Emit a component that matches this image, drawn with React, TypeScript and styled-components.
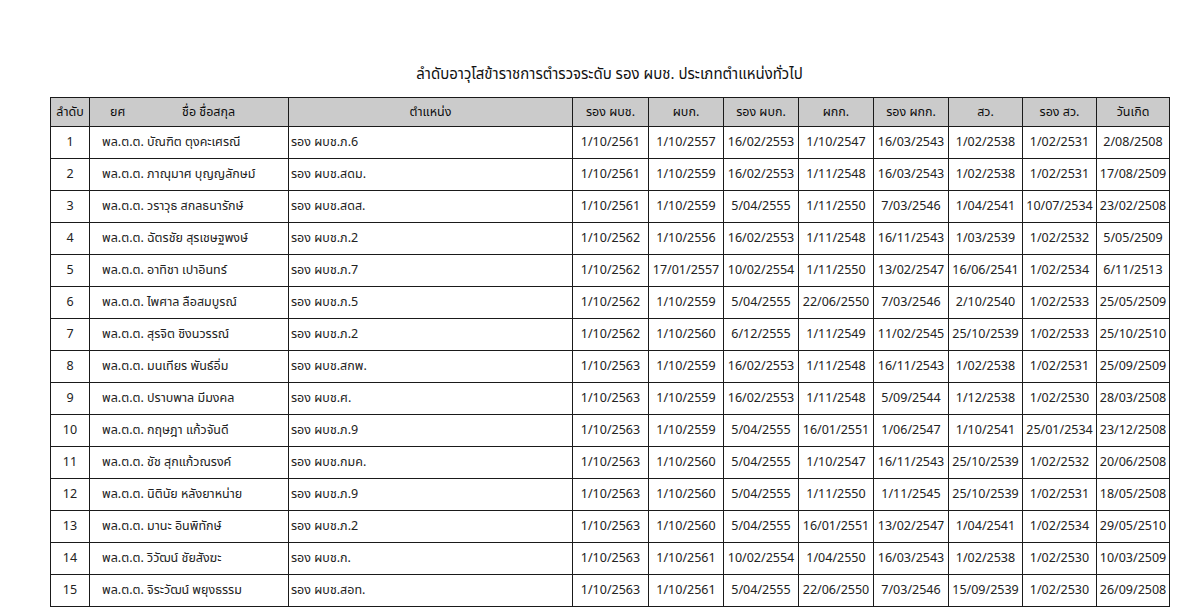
import styled, { createGlobalStyle } from 'styled-components';

const GlobalStyle = createGlobalStyle`
    html, body {
        margin: 0;
        padding: 0;
        background: #ffffff;
        overflow: hidden;
    }
    body {
        font-family: Tahoma, "Noto Sans Thai", "Liberation Sans", "DejaVu Sans", sans-serif;
        color: #222222;
    }
`;

const Page = styled.div`
    width: 1200px;
    height: 611px;
    padding: 65px 0 0 50px;
    box-sizing: border-box;
    overflow: hidden;
`;

const Title = styled.h1`
    width: 1119px;
    margin: 0 0 12px;
    font-size: 15px;
    font-weight: 400;
    line-height: 20px;
    text-align: center;
    color: #111111;
`;

const Table = styled.table`
    width: 1119px;
    table-layout: fixed;
    border-collapse: collapse;
    font-size: 12.5px;
`;

const Col = styled.col<{ $w: number }>`
    width: ${(p) => p.$w}px;
`;

const HeadRow = styled.tr`
    height: 29px;
    background-color: #cbcbcb;
`;

const HeadCell = styled.th<{ $align?: string }>`
    border: 1px solid #1a1a1a;
    padding: 0 4px;
    font-weight: 400;
    color: #0d0d0d;
    text-align: ${(p) => p.$align || 'center'};
    white-space: nowrap;
`;

const NameHead = styled.span`
    display: inline-block;
    width: 72px;
    padding-left: 16px;
`;

const Row = styled.tr`
    height: 32px;
`;

const Cell = styled.td<{ $align?: string; $pad?: number }>`
    border: 1px solid #1a1a1a;
    padding: 0 ${(p) => p.$pad ?? 2}px;
    text-align: ${(p) => p.$align || 'center'};
    white-space: nowrap;
    overflow: hidden;
`;

const widths = [39, 199, 284, 76, 75, 75, 75, 75, 74, 74, 73];
const dateHeads = ['รอง ผบช.', 'ผบก.', 'รอง ผบก.', 'ผกก.', 'รอง ผกก.', 'สว.', 'รอง สว.', 'วันเกิด'];

const rows: [string, string, string[]][] = [
    ['พล.ต.ต. บัณฑิต ตุงคะเศรณี', 'รอง ผบช.ภ.6', ['1/10/2561', '1/10/2557', '16/02/2553', '1/10/2547', '16/03/2543', '1/02/2538', '1/02/2531', '2/08/2508']],
    ['พล.ต.ต. ภาณุมาศ บุญญลักษม์', 'รอง ผบช.สดม.', ['1/10/2561', '1/10/2559', '16/02/2553', '1/11/2548', '16/03/2543', '1/02/2538', '1/02/2531', '17/08/2509']],
    ['พล.ต.ต. วราวุธ สกลธนารักษ์', 'รอง ผบช.สดส.', ['1/10/2561', '1/10/2559', '5/04/2555', '1/11/2550', '7/03/2546', '1/04/2541', '10/07/2534', '23/02/2508']],
    ['พล.ต.ต. ฉัตรชัย สุรเชษฐพงษ์', 'รอง ผบช.ภ.2', ['1/10/2562', '1/10/2556', '16/02/2553', '1/11/2548', '16/11/2543', '1/03/2539', '1/02/2532', '5/05/2509']],
    ['พล.ต.ต. อาทิชา เปาอินทร์', 'รอง ผบช.ภ.7', ['1/10/2562', '17/01/2557', '10/02/2554', '1/11/2550', '13/02/2547', '16/06/2541', '1/02/2534', '6/11/2513']],
    ['พล.ต.ต. ไพศาล ลือสมบูรณ์', 'รอง ผบช.ภ.5', ['1/10/2562', '1/10/2559', '5/04/2555', '22/06/2550', '7/03/2546', '2/10/2540', '1/02/2533', '25/05/2509']],
    ['พล.ต.ต. สุรจิต ชิงนวรรณ์', 'รอง ผบช.ภ.2', ['1/10/2562', '1/10/2560', '6/12/2555', '1/11/2549', '11/02/2545', '25/10/2539', '1/02/2533', '25/10/2510']],
    ['พล.ต.ต. มนเทียร พันธ์อิ่ม', 'รอง ผบช.สกพ.', ['1/10/2563', '1/10/2559', '16/02/2553', '1/11/2548', '16/11/2543', '1/02/2538', '1/02/2531', '25/09/2509']],
    ['พล.ต.ต. ปราบพาล มีมงคล', 'รอง ผบช.ศ.', ['1/10/2563', '1/10/2559', '16/02/2553', '1/11/2548', '5/09/2544', '1/12/2538', '1/02/2530', '28/03/2508']],
    ['พล.ต.ต. กฤษฎา แก้วจันดี', 'รอง ผบช.ภ.9', ['1/10/2563', '1/10/2559', '5/04/2555', '16/01/2551', '1/06/2547', '1/10/2541', '25/01/2534', '23/12/2508']],
    ['พล.ต.ต. ชัช สุกแก้วณรงค์', 'รอง ผบช.กมค.', ['1/10/2563', '1/10/2560', '5/04/2555', '1/10/2547', '16/11/2543', '25/10/2539', '1/02/2532', '20/06/2508']],
    ['พล.ต.ต. นิตินัย หลังยาหน่าย', 'รอง ผบช.ภ.9', ['1/10/2563', '1/10/2560', '5/04/2555', '1/11/2550', '1/11/2545', '25/10/2539', '1/02/2531', '18/05/2508']],
    ['พล.ต.ต. มานะ อินพิทักษ์', 'รอง ผบช.ภ.2', ['1/10/2563', '1/10/2560', '5/04/2555', '16/01/2551', '13/02/2547', '1/04/2541', '1/02/2534', '29/05/2510']],
    ['พล.ต.ต. วิวัฒน์ ชัยสังฆะ', 'รอง ผบช.ก.', ['1/10/2563', '1/10/2561', '10/02/2554', '1/04/2550', '16/03/2543', '1/02/2538', '1/02/2530', '10/03/2509']],
    ['พล.ต.ต. จิระวัฒน์ พยุงธรรม', 'รอง ผบช.สอท.', ['1/10/2563', '1/10/2561', '5/04/2555', '22/06/2550', '7/03/2546', '15/09/2539', '1/02/2530', '26/09/2508']],
];

const App = () => {
    return (
        <Page>
            <GlobalStyle />
            <Title>ลำดับอาวุโสข้าราชการตำรวจระดับ รอง ผบช. ประเภทตำแหน่งทั่วไป</Title>
            <Table>
                <colgroup>
                    {widths.map((w, i) => (
                        <Col key={i} $w={w} />
                    ))}
                </colgroup>
                <thead>
                    <HeadRow>
                        <HeadCell>ลำดับ</HeadCell>
                        <HeadCell $align="left">
                            <NameHead>ยศ</NameHead>ชื่อ ชื่อสกุล
                        </HeadCell>
                        <HeadCell>ตำแหน่ง</HeadCell>
                        {dateHeads.map((h) => (
                            <HeadCell key={h}>{h}</HeadCell>
                        ))}
                    </HeadRow>
                </thead>
                <tbody>
                    {rows.map(([name, pos, dates], i) => (
                        <Row key={i}>
                            <Cell>{i + 1}</Cell>
                            <Cell $align="left" $pad={12}>{name}</Cell>
                            <Cell $align="left">{pos}</Cell>
                            {dates.map((d, j) => (
                                <Cell key={j}>{d}</Cell>
                            ))}
                        </Row>
                    ))}
                </tbody>
            </Table>
        </Page>
    );
};

export default App;
